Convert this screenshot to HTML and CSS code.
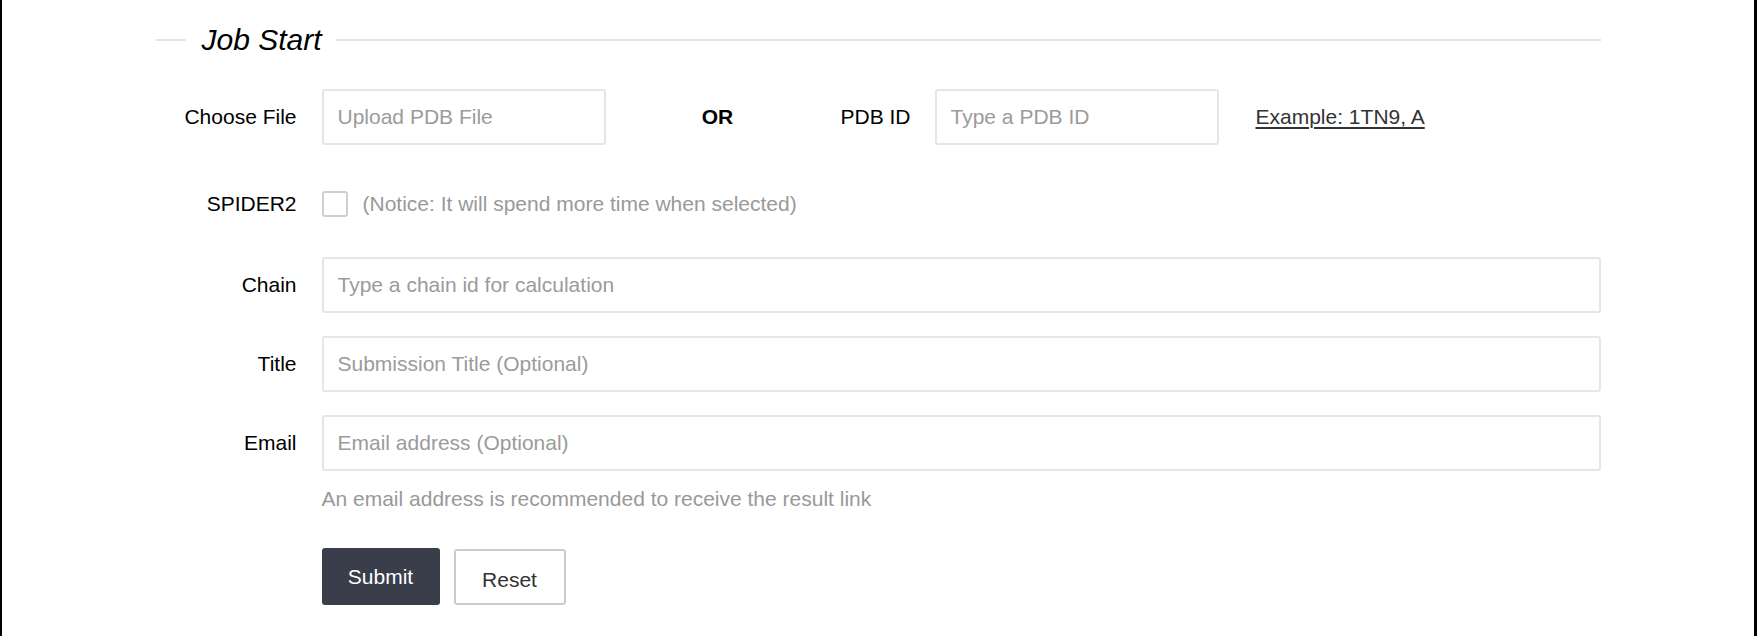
FILE: index.html
```html
<!DOCTYPE html>
<html lang="en">
<head>
  <meta charset="UTF-8" />
  <meta name="viewport" content="width=device-width, initial-scale=1.0"/>
  <title>Job Start</title>
  <link rel="stylesheet" href="styles.css">
</head>
<body>

  <div class="page">
    <form class="job-form" onsubmit="return false;">

      <div class="legend"><span>Job Start</span></div>

      <div class="row">
        <label class="row-label" for="pdb-file">Choose File</label>
        <div class="inline-fields">
          <input id="pdb-file" class="field field-short" placeholder="Upload PDB File" />
          <div class="or">OR</div>
          <label class="sub-label" for="pdb-id">PDB ID</label>
          <input id="pdb-id" class="field field-short" placeholder="Type a PDB ID" />
          <a class="example" href="#">Example: 1TN9, A</a>
        </div>
      </div>

      <div class="row row-check">
        <label class="row-label" for="spider2">SPIDER2</label>
        <div class="check-wrap">
          <input id="spider2" type="checkbox" class="check" />
          <span class="muted">(Notice: It will spend more time when selected)</span>
        </div>
      </div>

      <div class="row">
        <label class="row-label" for="chain">Chain</label>
        <input id="chain" class="field" placeholder="Type a chain id for calculation" />
      </div>

      <div class="row">
        <label class="row-label" for="title">Title</label>
        <input id="title" class="field" placeholder="Submission Title (Optional)" />
      </div>

      <div class="row row-email">
        <label class="row-label" for="email">Email</label>
        <input id="email" class="field" placeholder="Email address (Optional)" />
      </div>

      <div class="row row-help">
        <span></span>
        <p class="muted help">An email address is recommended to receive the result link</p>
      </div>

      <div class="row row-buttons">
        <span></span>
        <div class="buttons">
          <button type="submit" class="btn btn-submit">Submit</button>
          <button type="reset" class="btn btn-reset">Reset</button>
        </div>
      </div>

    </form>
  </div>

</body>
</html>
```

FILE: styles.css
```css
html, body {
  margin: 0;
  padding: 0;
  background: #fff;
}

body {
  font-family: "Liberation Sans", Arial, sans-serif;
  font-size: 21px;
  color: #000;
}

.page {
  min-height: 100vh;
  box-sizing: border-box;
  border-left: 2px solid #000;
  border-right: 3px solid #000;
  padding-top: 25px;
}

.job-form {
  width: 1445px;
  margin: 0 auto;
}

/* legend with the line running through it */
.legend {
  display: flex;
  align-items: center;
  margin-bottom: 34px;
}

.legend::before,
.legend::after {
  content: "";
  height: 2px;
  background: #e5e5e5;
}

.legend::before {
  width: 30px;
}

.legend::after {
  flex: 1;
}

.legend span {
  font-size: 30px;
  line-height: 30px;
  font-style: italic;
  padding: 0 14px 0 16px;
}

.row {
  display: grid;
  grid-template-columns: 141px 1fr;
  column-gap: 25px;
  align-items: center;
  height: 56px;
  margin-bottom: 23px;
}

.row-label {
  text-align: right;
}

.inline-fields {
  display: flex;
  align-items: center;
}

.field {
  box-sizing: border-box;
  height: 56px;
  width: 100%;
  padding: 0 14px;
  font-family: inherit;
  font-size: 21px;
  color: #333;
  border: 2px solid #e6e6e6;
  border-radius: 3px;
  outline: none;
}

.field::placeholder {
  color: #9b9b9b;
}

.field-short {
  width: 284px;
  flex: none;
}

.or {
  width: 224px;
  text-align: center;
  font-weight: bold;
}

.sub-label {
  width: 81px;
  text-align: right;
  margin-right: 24px;
}

.example {
  margin-left: 37px;
  color: #333;
  text-decoration: underline;
  text-decoration-thickness: 2px;
  text-underline-offset: 3px;
}

.row-check {
  height: 26px;
  margin-top: 46px;
  margin-bottom: 40px;
}

.check-wrap {
  display: flex;
  align-items: center;
}

.check {
  appearance: none;
  -webkit-appearance: none;
  box-sizing: border-box;
  width: 26px;
  height: 26px;
  margin: 0 15px 0 0;
  border: 2px solid #cfcfcf;
  border-radius: 3px;
  background: #fff;
}

.muted {
  color: #999;
}

.row-email {
  margin-bottom: 0;
}

.row-help {
  height: auto;
  margin-top: 13px;
  margin-bottom: 34px;
}

.help {
  margin: 0;
  line-height: 30px;
}

.row-buttons {
  height: auto;
  align-items: start;
}

.buttons {
  display: flex;
  align-items: flex-start;
  gap: 14px;
}

.btn {
  box-sizing: border-box;
  font-family: inherit;
  font-size: 21px;
  border-radius: 3px;
  cursor: pointer;
}

.btn-submit {
  width: 118px;
  height: 57px;
  background: #3a3d4a;
  color: #fff;
  border: none;
}

.btn-reset {
  width: 112px;
  height: 56px;
  margin-top: 1px;
  padding-top: 6px;
  background: #fff;
  color: #333;
  border: 2px solid #cccccc;
}
```
